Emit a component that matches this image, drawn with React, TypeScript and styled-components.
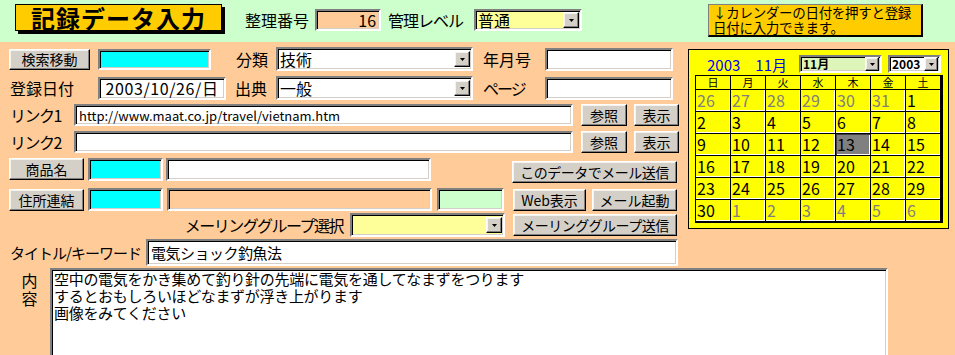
import React from "react";
import styled, { createGlobalStyle, css } from "styled-components";

const Global = createGlobalStyle`
  html, body { margin: 0; padding: 0; background: #FFCC99; }
  body { font-family: "Noto Sans CJK JP", "Liberation Sans", sans-serif; color: #000; }
  * { box-sizing: border-box; }
`;

const sunken = css`
  border-style: solid;
  border-width: 2px;
  border-color: #808080 #ffffff #ffffff #808080;
  box-shadow: inset 1px 1px 0 #000, inset -1px -1px 0 #D4D0C8;
`;

const raised = css`
  border-style: solid;
  border-width: 1px;
  border-color: #ffffff #000 #000 #ffffff;
  box-shadow: inset -1px -1px 0 #808080, inset 1px 1px 0 #f4f3ee;
`;

const Page = styled.div`
  width: 955px;
  height: 355px;
  overflow: hidden;
  background: #FFCC99;
  display: flex;
  flex-direction: column;
`;

const Header = styled.header`
  height: 42px;
  flex-shrink: 0;
  background: #CCFFCC;
  display: flex;
  align-items: flex-start;
  padding-left: 15px;
`;

const TitleBox = styled.div`
  flex-shrink: 0;
  margin-top: 4px;
  width: 207px;
  height: 27px;
  background: #FFCC00;
  border: 1px solid #000;
  box-shadow: 3px 3px 0 #000;
  display: flex;
  align-items: center;
  justify-content: center;
  font-size: 24px;
  font-weight: bold;
  letter-spacing: 1px;
  line-height: 1;
  white-space: nowrap;
`;

const Label = styled.span<{ $w?: number; $ml?: number; $pl?: number; $pr?: number; $right?: boolean; $fs?: number; $ls?: number; $h?: number; $mt?: number }>`
  display: inline-flex;
  align-items: center;
  justify-content: ${(p) => (p.$right ? "flex-end" : "flex-start")};
  ${(p) => (p.$w !== undefined ? `width: ${p.$w}px;` : "")}
  height: ${(p) => p.$h ?? 24}px;
  margin-left: ${(p) => p.$ml ?? 0}px;
  margin-top: ${(p) => p.$mt ?? 0}px;
  padding-left: ${(p) => p.$pl ?? 0}px;
  padding-right: ${(p) => p.$pr ?? 0}px;
  font-size: ${(p) => p.$fs ?? 16}px;
  letter-spacing: ${(p) => p.$ls ?? 0}px;
  white-space: nowrap;
  flex-shrink: 0;
`;

const Field = styled.div<{ $w: number; $h: number; $bg?: string; $ml?: number; $mt?: number; $fs?: number; $align?: "left" | "right" | "center"; $ls?: number; $bold?: boolean }>`
  ${sunken}
  flex-shrink: 0;
  width: ${(p) => p.$w}px;
  height: ${(p) => p.$h}px;
  margin-left: ${(p) => p.$ml ?? 0}px;
  margin-top: ${(p) => p.$mt ?? 0}px;
  background: ${(p) => p.$bg ?? "#ffffff"};
  font-size: ${(p) => p.$fs ?? 16}px;
  font-weight: ${(p) => (p.$bold ? "bold" : "normal")};
  letter-spacing: ${(p) => p.$ls ?? 0}px;
  display: flex;
  align-items: center;
  justify-content: ${(p) => (p.$align === "right" ? "flex-end" : p.$align === "center" ? "center" : "flex-start")};
  padding: 0 3px;
  white-space: nowrap;
  overflow: hidden;
  line-height: 1;
`;

const SelectField = styled(Field)`
  justify-content: space-between;
  padding: 0 1px 0 2px;
`;

const DropButton = styled.span<{ $s?: number }>`
  ${raised}
  width: ${(p) => p.$s ?? 16}px;
  height: ${(p) => p.$s ?? 16}px;
  flex-shrink: 0;
  background: #D4D0C8;
  display: flex;
  align-items: center;
  justify-content: center;
`;

const Button = styled.button<{ $w: number; $h: number; $ml?: number; $mt?: number }>`
  ${raised}
  flex-shrink: 0;
  width: ${(p) => p.$w}px;
  height: ${(p) => p.$h}px;
  margin-left: ${(p) => p.$ml ?? 0}px;
  margin-top: ${(p) => p.$mt ?? 0}px;
  padding: 0;
  background: #D4D0C8;
  font-family: inherit;
  font-size: 14px;
  color: #000;
  line-height: 1;
  white-space: nowrap;
  letter-spacing: ${(p) => (p.$w > 120 ? -0.5 : 0)}px;
`;

const NoteBox = styled.div`
  flex-shrink: 0;
  margin-left: 126px;
  margin-top: 4px;
  width: 215px;
  height: 33px;
  background: #FFCC00;
  border-style: solid;
  border-width: 1px 2px 2px 1px;
  border-color: #808080 #000 #000 #808080;
  font-size: 13.5px;
  line-height: 15px;
  padding: 0 0 0 4px;
  letter-spacing: -0.3px;
  white-space: nowrap;
`;

const TopSection = styled.div`
  display: flex;
  align-items: flex-start;
`;

const FormColumn = styled.div`
  width: 688px;
  display: flex;
  flex-direction: column;
  flex-shrink: 0;
`;

const Row = styled.div<{ $mt: number; $h: number; $top?: boolean }>`
  display: flex;
  align-items: ${(p) => (p.$top ? "flex-start" : "center")};
  margin-top: ${(p) => p.$mt}px;
  height: ${(p) => p.$h}px;
  padding-left: 9px;
`;

const CalendarBox = styled.div`
  flex-shrink: 0;
  margin-top: 7px;
  width: 261px;
  height: 180px;
  background: #FFFF00;
  border: 1px solid #000;
  padding: 5px 0 0 6px;
`;

const CalTop = styled.div`
  display: flex;
  align-items: flex-start;
  height: 20px;
`;

const CalCaption = styled.span`
  margin-left: 12px;
  width: 92px;
  height: 18px;
  display: flex;
  align-items: center;
  color: #0000FF;
  font-size: 15px;
  white-space: pre;
`;

const CalGrid = styled.div`
  width: 248px;
  display: grid;
  grid-template-columns: repeat(7, 1fr);
  grid-template-rows: 13px repeat(6, 21px);
  gap: 1px;
  background: #000;
  border-style: solid;
  border-color: #000;
  border-width: 1px 3px 2px 1px;
`;

const DayHead = styled.div`
  background: #FFFF00;
  font-size: 11px;
  line-height: 13px;
  height: 13px;
  text-align: center;
`;

const DayCell = styled.div<{ $other?: boolean; $sel?: boolean }>`
  background: ${(p) => (p.$sel ? "#808080" : "#FFFF00")};
  color: ${(p) => (p.$other ? "#808080" : "#000")};
  font-size: 16px;
  line-height: 21px;
  padding-left: 1px;
  box-shadow: ${(p) => (p.$sel ? "inset 1px 1px 0 #404040, inset -1px -1px 0 #fff" : "inset -1px -1px 0 #fff")};
`;

const ContentRow = styled.div`
  display: flex;
  align-items: flex-start;
  margin-top: 2px;
  padding-left: 9px;
  flex: 1;
`;

const VerticalLabel = styled.div`
  width: 41px;
  padding-top: 3px;
  font-size: 16px;
  line-height: 18px;
  text-align: center;
  display: flex;
  flex-direction: column;
  align-items: center;
`;

const TextArea = styled.div`
  ${sunken}
  width: 838px;
  height: 100px;
  background: #fff;
  font-size: 15px;
  line-height: 17px;
  padding: 0 2px;
  white-space: pre;
  letter-spacing: -0.3px;
`;

const Arrow = () => (
  <svg width={5} height={3} viewBox="0 0 5 3">
    <polygon points="0,0 5,0 2.5,3" fill="#000" />
  </svg>
);

const Select = ({ w, h, bg, text, fs = 16, bold, s }: { w: number; h: number; bg?: string; text: string; fs?: number; bold?: boolean; s?: number }) => (
  <SelectField $w={w} $h={h} $bg={bg} $fs={fs} $bold={bold}>
    <span>{text}</span>
    <DropButton $s={s}>
      <Arrow />
    </DropButton>
  </SelectField>
);

const weeks: { d: number; o?: boolean }[][] = [
  [{ d: 26, o: true }, { d: 27, o: true }, { d: 28, o: true }, { d: 29, o: true }, { d: 30, o: true }, { d: 31, o: true }, { d: 1 }],
  [2, 3, 4, 5, 6, 7, 8].map((d) => ({ d })),
  [9, 10, 11, 12, 13, 14, 15].map((d) => ({ d })),
  [16, 17, 18, 19, 20, 21, 22].map((d) => ({ d })),
  [23, 24, 25, 26, 27, 28, 29].map((d) => ({ d })),
  [{ d: 30 }, { d: 1, o: true }, { d: 2, o: true }, { d: 3, o: true }, { d: 4, o: true }, { d: 5, o: true }, { d: 6, o: true }],
];

const heads = ["日", "月", "火", "水", "木", "金", "土"];

export default function App() {
  return (
    <Page>
      <Global />
      <Header>
        <TitleBox>記録データ入力</TitleBox>
        <Label $ml={23} $mt={9} $h={22}>整理番号</Label>
        <Field $w={66} $h={22} $ml={6} $mt={9} $bg="#FFCC99" $align="right">16</Field>
        <Label $ml={7} $mt={9} $h={22} $ls={-1}>管理レベル</Label>
        <Label $ml={11} $mt={9} $h={22}>
          <Select w={108} h={22} bg="#FFFF99" text="普通" />
        </Label>
        <NoteBox>
          ↓カレンダーの日付を押すと登録
          <br />
          日付に入力できます。
        </NoteBox>
      </Header>

      <TopSection>
        <FormColumn>
          <Row $mt={5} $h={24}>
            <Button $w={81} $h={21}>検索移動</Button>
            <Field $w={113} $h={21} $ml={8} $bg="#00FFFF" />
            <Label $w={65} $right $pr={8}>分類</Label>
            <Select w={197} h={24} text="技術" />
            <Label $w={72} $pl={10}>年月号</Label>
            <Field $w={128} $h={23} />
          </Row>
          <Row $mt={5} $h={24}>
            <Label $w={89} $pl={1}>登録日付</Label>
            <Field $w={128} $h={23} $align="center" $ls={0.6}>2003/10/26/日</Field>
            <Label $w={50} $right $pr={9}>出典</Label>
            <Select w={197} h={24} text="一般" />
            <Label $w={72} $pl={10} $ls={-2}>ページ</Label>
            <Field $w={128} $h={23} />
          </Row>
          <Row $mt={4} $h={22}>
            <Label $w={65} $pl={1} $ls={-1.5} $h={22}>リンク1</Label>
            <Field $w={499} $h={22} $fs={13}>http://www.maat.co.jp/travel/vietnam.htm</Field>
            <Button $w={46} $h={22} $ml={8}>参照</Button>
            <Button $w={45} $h={22} $ml={7}>表示</Button>
          </Row>
          <Row $mt={5} $h={22}>
            <Label $w={65} $pl={1} $ls={-1.5} $h={22}>リンク2</Label>
            <Field $w={499} $h={22} />
            <Button $w={46} $h={22} $ml={8}>参照</Button>
            <Button $w={45} $h={22} $ml={7}>表示</Button>
          </Row>
          <Row $mt={5} $h={23} $top>
            <Button $w={75} $h={22}>商品名</Button>
            <Field $w={75} $h={23} $ml={4} $bg="#00FFFF" />
            <Field $w={265} $h={23} $ml={3} />
            <Button $w={165} $h={22} $ml={81} $mt={3}>このデータでメール送信</Button>
          </Row>
          <Row $mt={7} $h={23} $top>
            <Button $w={75} $h={22} $mt={1}>住所連結</Button>
            <Field $w={75} $h={23} $ml={4} $bg="#00FFFF" />
            <Field $w={265} $h={23} $ml={4} $bg="#FFCC99" />
            <Field $w={67} $h={23} $ml={5} $bg="#CCFFCC" />
            <Button $w={73} $h={22} $ml={9} $mt={1}>Web表示</Button>
            <Button $w={85} $h={22} $ml={6} $mt={1}>メール起動</Button>
          </Row>
          <Row $mt={2} $h={24}>
            <Label $w={341} $right $pr={7} $ls={-1.5} $fs={16}>メーリンググループ選択</Label>
            <Select w={155} h={24} bg="#FFFF99" text="" />
            <Button $w={164} $h={22} $ml={8}>メーリンググループ送信</Button>
          </Row>
          <Row $mt={2} $h={27}>
            <Label $w={137} $pl={1} $fs={15} $ls={-1} $h={27}>タイトル/キーワード</Label>
            <Field $w={532} $h={27} $fs={15} $ls={-0.5}>電気ショック釣魚法</Field>
          </Row>
        </FormColumn>

        <CalendarBox>
          <CalTop>
            <CalCaption>2003　11月</CalCaption>
            <Select w={83} h={18} bg="#DDF5B8" text="11月" fs={12} bold s={14} />
            <Label $ml={6} $h={18}>
              <Select w={53} h={18} text="2003" fs={12} bold s={14} />
            </Label>
          </CalTop>
          <CalGrid>
            {heads.map((h) => (
              <DayHead key={h}>{h}</DayHead>
            ))}
            {weeks.map((w, wi) =>
              w.map((c, ci) => (
                <DayCell key={`${wi}-${ci}`} $other={c.o} $sel={!c.o && c.d === 13}>
                  {c.d}
                </DayCell>
              ))
            )}
          </CalGrid>
        </CalendarBox>
      </TopSection>

      <ContentRow>
        <VerticalLabel>
          <span>内</span>
          <span>容</span>
        </VerticalLabel>
        <TextArea>
          {"空中の電気をかき集めて釣り針の先端に電気を通してなまずをつります\nするとおもしろいほどなまずが浮き上がります\n画像をみてください"}
        </TextArea>
      </ContentRow>
    </Page>
  );
}
